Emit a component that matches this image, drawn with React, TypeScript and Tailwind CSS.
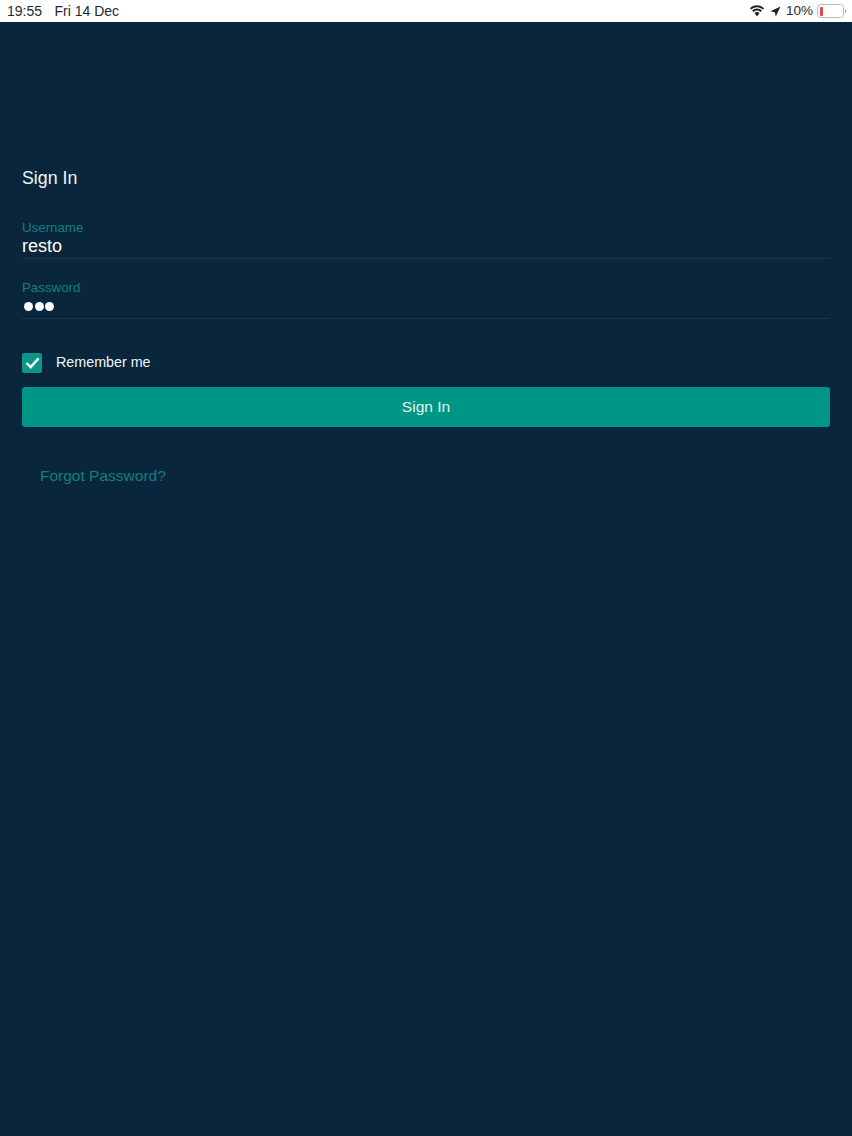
const App = () => {
  return (
    <div className="min-h-[1136px] w-[852px] bg-[#09263c] font-['Liberation_Sans',Arial,sans-serif]">
      {/* status bar */}
      <div className="flex h-[22px] items-center justify-between bg-white pl-[7px] pr-[6px] text-[14px] text-[#222a30]">
        <div className="flex gap-[12.500px]">
          <span>19:55</span>
          <span>Fri 14 Dec</span>
        </div>
        <div className="flex items-center">
          <svg width="16" height="12" viewBox="0 0 16 12" fill="#1d2226">
            <path d="M8 2.200c2.300 0 4.400.9 5.900 2.400l1.200-1.300C13.300 1.400 10.800.3 8 .3S2.700 1.400.900 3.300l1.200 1.300C3.600 3.100 5.700 2.200 8 2.200z" />
            <path d="M8 5.400c1.400 0 2.700.6 3.700 1.500l1.200-1.300C11.600 4.400 9.900 3.600 8 3.600s-3.600.8-4.900 2l1.200 1.300c1-.9 2.300-1.500 3.700-1.500z" />
            <path d="M8 7c-1 0-1.800.4-2.500 1L8 11.500 10.500 8C9.800 7.400 9 7 8 7z" />
          </svg>
          <svg className="ml-[5px]" width="11" height="11" viewBox="0 0 11 11" fill="#1d2226">
            <path d="M10.500.5 5.800 10.500 4.800 6.200.5 5.200z" />
          </svg>
          <span className="ml-[5px] text-[13.500px]">10%</span>
          <div className="ml-[4px] flex items-center">
            <div className="flex h-[14px] w-[27px] items-center rounded-[3.500px] border border-[#b9bdc0] p-[1.500px]">
              <div className="h-full w-[3px] rounded-[1px] bg-[#e0474c]" />
            </div>
            <div className="ml-px h-[4px] w-px rounded-r-sm bg-[#9b9fa2]" />
          </div>
        </div>
      </div>

      {/* form */}
      <div className="px-[22px] pt-[145px]">
        <h1 className="text-[17.800px] leading-[22px] font-normal text-[#eef6f8]">Sign In</h1>

        <div className="mt-[31px] border-b border-[#17384a] pb-[2px]">
          <div className="text-[13.300px] leading-[16px] text-[#12807a]">Username</div>
          <div className="text-[18px] leading-[20px] text-white">resto</div>
        </div>

        <div className="mt-[21px] border-b border-[#17384a] pb-[3px]">
          <div className="text-[13.300px] leading-[15px] text-[#12807a]">Password</div>
          <div className="flex h-[20px] items-center gap-[1.500px] pl-[2px] pt-[2px]">
            <span className="h-[9px] w-[9px] rounded-full bg-white" />
            <span className="h-[9px] w-[9px] rounded-full bg-white" />
            <span className="h-[9px] w-[9px] rounded-full bg-white" />
          </div>
        </div>

        <div className="mt-[34px] flex items-center">
          <div className="flex h-[20px] w-[20px] items-center justify-center rounded-[2px] bg-[#0c9685]">
            <svg width="15" height="12" viewBox="0 0 16 13" fill="none" stroke="#fff" strokeWidth="2.600">
              <path d="M1.500 6.500 6 11 14.500 1.500" />
            </svg>
          </div>
          <span className="ml-[14px] pb-[2px] text-[14.300px] leading-[18px] text-[#eef6f8]">Remember me</span>
        </div>

        <button className="mt-[14px] flex h-[40px] w-full items-center justify-center rounded-[3px] bg-[#009686] text-[15.500px] text-[#e6f5f3]">
          Sign In
        </button>

        <div className="mt-[39px] pl-[18px] text-[15.500px] leading-[20px] text-[#12807a]">Forgot Password?</div>
      </div>
    </div>
  );
};

export default App;
